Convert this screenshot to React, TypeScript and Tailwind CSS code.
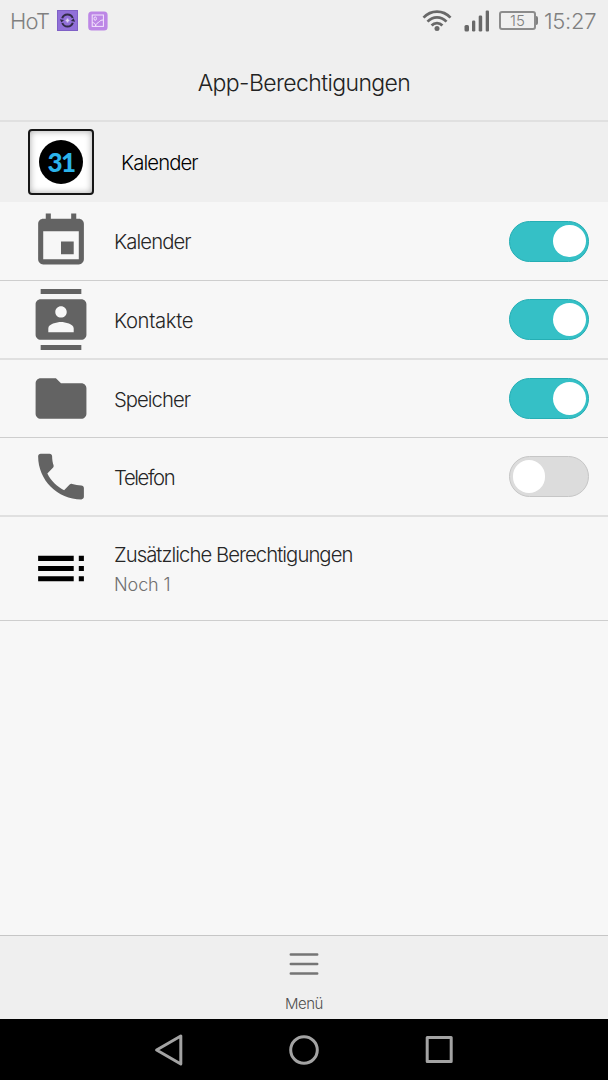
import type { ReactNode } from "react";

const ICONS = {
  calendar:
    "M17 12h-5v5h5v-5zM16 1v2H8V1H6v2H5c-1.11 0-1.99.9-1.99 2L3 19c0 1.1.89 2 2 2h14c1.1 0 2-.9 2-2V5c0-1.1-.9-2-2-2h-1V1h-2zm3 18H5V8h14v11z",
  contacts:
    "M20 0H4v2h16V0zM4 24h16v-2H4v2zM20 4H4c-1.1 0-2 .9-2 2v12c0 1.1.9 2 2 2h16c1.1 0 2-.9 2-2V6c0-1.1-.9-2-2-2zm-8 2.75c1.24 0 2.25 1.01 2.25 2.25s-1.01 2.25-2.25 2.25S9.75 10.24 9.75 9 10.76 6.75 12 6.75zM17 17H7v-1.5c0-1.67 3.33-2.5 5-2.5s5 .83 5 2.5V17z",
  folder:
    "M10 4H4c-1.1 0-1.99.9-1.99 2L2 18c0 1.1.9 2 2 2h16c1.1 0 2-.9 2-2V8c0-1.1-.9-2-2-2h-8l-2-2z",
  phone:
    "M6.62 10.79c1.44 2.83 3.76 5.14 6.59 6.59l2.2-2.2c.27-.27.67-.36 1.02-.24 1.12.37 2.33.57 3.57.57.55 0 1 .45 1 1V20c0 .55-.45 1-1 1-9.39 0-17-7.61-17-17 0-.55.45-1 1-1h3.5c.55 0 1 .45 1 1 0 1.25.2 2.45.57 3.57.11.35.03.74-.25 1.02l-2.2 2.2z",
  toc: "M3 9h14V7H3v2zm0 4h14v-2H3v2zm0 4h14v-2H3v2zm16 0h2v-2h-2v2zm0-10v2h2V7h-2zm0 6h2v-2h-2v2z",
};

function RowIcon({ path, className }: { path: string; className: string }) {
  return (
    <svg viewBox="-0.2 0 24 24" className={`ml-[30px] size-[61px] shrink-0 fill-current ${className}`}>
      <path d={path} />
    </svg>
  );
}

function Toggle({ on }: { on: boolean }) {
  return (
    <button
      type="button"
      role="switch"
      aria-checked={on}
      className={`mr-[19px] ml-auto flex h-[41px] w-20 shrink-0 items-center rounded-full border ${
        on ? "justify-end border-[#25aeb4] bg-[#35c0c6] pr-[2.5px]" : "justify-start border-[#c6c6c6] bg-[#dcdcdc] pl-[2.5px]"
      }`}
    >
      <span className="size-[32.5px] rounded-full bg-white" />
    </button>
  );
}

interface RowProps {
  icon: string;
  on: boolean;
  className: string;
  labelClassName: string;
  children: ReactNode;
}

function Row({ icon, on, className, labelClassName, children }: RowProps) {
  return (
    <li className={`flex shrink-0 items-center ${className}`}>
      <RowIcon path={icon} className="text-[#636363]" />
      <span className={`ml-[23px] pt-[2px] text-[20.3px] leading-7 text-[#262626] ${labelClassName}`}>{children}</span>
      <Toggle on={on} />
    </li>
  );
}

function StatusBar() {
  return (
    <div className="flex h-[41px] shrink-0 items-center pl-[10px] text-[#808080]">
      <span className="w-[47px] pt-px text-[22px] tracking-[-0.8px]">HoT</span>
      <svg viewBox="0 0 21 21" className="size-[21px]">
        <rect width="21" height="21" fill="#7f60c6" />
        <rect x="1" y="1" width="19" height="19" fill="#9170d8" />
        <g fill="none" stroke="#322c48" strokeWidth="2">
          <path d="M5.2 8.3A5.600 5.600 0 0 1 15.700 8" />
          <path d="M15.800 12.700A5.600 5.600 0 0 1 5.300 13" />
        </g>
        <path d="M14 10.600h4.200l-2-3.200zM2.800 10.400h4.200l-2.200 3z" fill="#322c48" transform="rotate(8 10.500 10.500)" />
        <path d="M10.500 8.600v3.800M8.600 10.500h3.800" stroke="#dcd2f2" strokeWidth="1.600" />
      </svg>
      <svg viewBox="0 0 20 20" className="ml-[10px] size-5">
        <rect x=".2" y=".5" width="19.400" height="19" rx="3.500" fill="#bd87e6" />
        <g fill="none" stroke="#f4e6fd" strokeWidth="1">
          <rect x="4.200" y="4" width="11.200" height="11.400" />
          <ellipse cx="7.200" cy="7.600" rx="1.200" ry="1.700" />
          <path d="M7.600 15.200c.5-3.300 2.200-3 3.700-4.500 1.200-1.300 2-1.700 4-1.700M4.500 11.600c1.800 0 3 1.300 3.200 3.500" />
        </g>
      </svg>
      <svg viewBox="0 0 30 23" className="ml-auto h-[23px] w-[30px]" fill="none" stroke="#686868" strokeWidth="2.700">
        <path d="M1.500 8.600C9 .6 21 .6 28.500 8.600" />
        <path d="M5.500 12.600c5.300-5.700 13.700-5.700 19 0" />
        <path d="M9.600 16.500c3-3.300 7.800-3.300 10.800 0" />
        <circle cx="15" cy="19.600" r="2.500" fill="#686868" stroke="none" />
      </svg>
      <svg viewBox="0 0 26 22" className="ml-3 h-[22px] w-[26px]" fill="#686868">
        <rect x="0.500" y="15" width="4.500" height="6.500" rx="1.500" />
        <rect x="8" y="10.500" width="3.300" height="11" rx="1.300" />
        <rect x="14.700" y="5.500" width="3.500" height="16" rx="1.300" />
        <rect x="21.700" y=".5" width="3.300" height="21" rx="1" />
      </svg>
      <div className="ml-[9px] flex items-center">
        <div className="flex h-[19px] w-[37px] items-center justify-center rounded-[3px] border-2 border-[#8c8c8c] text-[15px] leading-none">
          15
        </div>
        <div className="h-[9px] w-[2px] rounded-r-sm bg-[#808080]" />
      </div>
      <span className="ml-[6px] w-[64px] pt-px text-[22px] tracking-[-0.3px] whitespace-nowrap">15:27</span>
    </div>
  );
}

export default function App() {
  return (
    <main className="flex h-[1080px] w-[608px] flex-col overflow-hidden bg-[#f7f7f7] font-['Inter','Liberation_Sans',sans-serif] font-light">
      <header className="flex h-[122px] shrink-0 flex-col border-b-2 border-[#e0e0e0] bg-[#efefef]">
        <StatusBar />
        <h1 className="flex h-[81px] items-center justify-center pt-[5px] text-[23px] tracking-[-0.6px] text-[#222]">
          App-Berechtigungen
        </h1>
      </header>

      <section className="flex h-20 shrink-0 items-center bg-[#efefef]">
        <div className="ml-7 flex size-[66px] items-center justify-center rounded-[4px] border-2 border-[#161616] bg-white shadow-[inset_0_0_7px_rgba(0,0,0,0.35)]">
          <div className="flex size-11 items-center justify-center rounded-full bg-black font-['Lato','Noto_Sans',sans-serif] text-[26px] leading-none font-black tracking-[-1.5px] text-[#2bb3ea]">
            31
          </div>
        </div>
        <h2 className="ml-[27px] pt-[2px] text-[20.3px] tracking-[-0.9px] text-black">Kalender</h2>
      </section>

      <ul className="flex flex-col">
        <Row icon={ICONS.calendar} on className="h-[79px] border-b border-[#cecece]" labelClassName="tracking-[-0.9px]">
          Kalender
        </Row>
        <Row icon={ICONS.contacts} on className="h-[79px] border-b-2 border-[#e0e0e0]" labelClassName="tracking-[-0.36px]">
          Kontakte
        </Row>
        <Row icon={ICONS.folder} on className="h-[78px] border-b border-[#cecece]" labelClassName="tracking-[-0.98px]">
          Speicher
        </Row>
        <Row icon={ICONS.phone} on={false} className="h-[79px] border-b-2 border-[#e0e0e0]" labelClassName="tracking-[-1.4px]">
          Telefon
        </Row>
        <li className="flex h-[104px] shrink-0 items-center border-b border-[#cecece]">
          <RowIcon path={ICONS.toc} className="text-black" />
          <div className="ml-[23px] pt-[3px]">
            <p className="text-[20.3px] leading-[30px] tracking-[-0.95px] text-[#262626]">Zusätzliche Berechtigungen</p>
            <p className="text-[18px] leading-[30px] tracking-[-0.1px] text-[#707070]">Noch 1</p>
          </div>
        </li>
      </ul>

      <footer className="mt-auto flex h-[84px] shrink-0 flex-col items-center border-t border-[#c6c6c6] bg-[#efefef]">
        <svg viewBox="0 0 30 24" className="mt-4 h-6 w-[30px]" stroke="#757575" strokeWidth="2.5" strokeLinecap="round">
          <path d="M1.800 2.600h26.400M1.800 12h26.400M1.800 21.400h26.400" />
        </svg>
        <span className="mt-[18px] text-[15px] leading-5 tracking-[-0.5px] text-[#505050]">Menü</span>
      </footer>

      <nav className="flex h-[61px] shrink-0 items-center justify-center bg-black">
        <svg viewBox="0 0 304 34" className="h-[34px] w-[304px]" fill="none" stroke="#a3a3a3" strokeWidth="3" strokeLinejoin="round">
          <path d="M28.800 3v28L4.600 17z" />
          <circle cx="152" cy="17" r="13.300" />
          <rect x="275.200" y="4.500" width="24" height="24" />
        </svg>
      </nav>
    </main>
  );
}
